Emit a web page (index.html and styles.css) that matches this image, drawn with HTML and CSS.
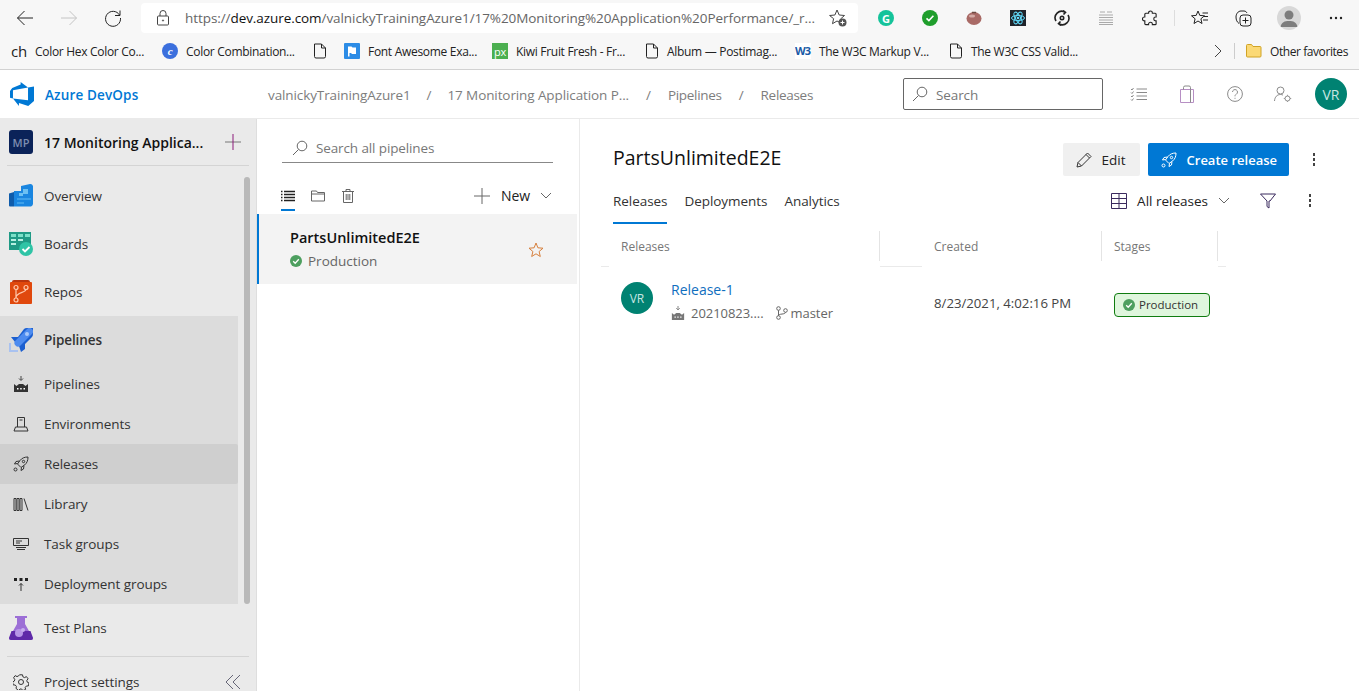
FILE: index.html
```html
<!DOCTYPE html>
<html lang="en">
<head>
  <meta charset="UTF-8">
  <meta name="viewport" content="width=device-width, initial-scale=1.0">
  <title>Releases - Azure DevOps</title>
  <link rel="stylesheet" href="styles.css">
</head>
<body>
<div class="browser">
  <div class="toolbar">
    <div class="nav-btns">
      <span class="tool"><svg width="18" height="18" viewBox="0 0 18 18" class="ic"><path d="M17 9H1.500M8.500 2 1.500 9l7 7"/></svg></span>
      <span class="tool off"><svg width="18" height="18" viewBox="0 0 18 18" class="ic"><path d="M1 9h15.500M9.500 2l7 7-7 7"/></svg></span>
      <span class="tool"><svg width="18" height="18" viewBox="0 0 18 18" class="ic"><path d="M15.500 6A7.500 7.500 0 1 0 16.500 9M16 1.500V6.500H11"/></svg></span>
    </div>
    <div class="address">
      <svg width="14" height="16" viewBox="0 0 14 16" class="ic thin"><rect x="1.500" y="6" width="11" height="9" rx="1"/><path d="M4 6V3.500a3 3 0 0 1 6 0V6"/><circle cx="7" cy="10.500" r=".6"/></svg>
      <span class="url"><span class="url-dim">https://</span>dev.azure.com<span class="url-dim">/valnickyTrainingAzure1/17%20Monitoring%20Application%20Performance/_r...</span></span>
      <svg width="20" height="20" viewBox="0 0 20 20" class="ic thin"><path d="M9 2l2.200 5 5.300.5-4 3.500 1 4.200L9 13l-4.500 2.700 1.100-5-4-3.200 5.300-.5z"/><circle cx="14.500" cy="14.500" r="4" fill="#555" stroke="none"/><path d="M14.500 12.500v4M12.500 14.500h4" stroke="#fff"/></svg>
    </div>
    <div class="exts">
      <span class="tool"><span class="ext-g">G</span></span>
      <span class="tool"><svg width="16" height="16" viewBox="0 0 16 16"><circle cx="8" cy="8" r="8" fill="#1f9e2c"/><path d="M4.500 8.300l2.400 2.300 4.500-4.800" fill="none" stroke="#fff" stroke-width="1.600"/></svg></span>
      <span class="tool"><svg width="16" height="14" viewBox="0 0 16 14"><ellipse cx="8" cy="7.500" rx="7.500" ry="6.500" fill="#a96a66"/><ellipse cx="6" cy="5" rx="3" ry="1.500" fill="#d3aaa5"/><path d="M6 1.500h4" stroke="#6d4b42" stroke-width="1.500"/></svg></span>
      <span class="tool"><svg width="16" height="16" viewBox="0 0 16 16"><rect width="16" height="16" fill="#20232a"/><g fill="none" stroke="#61dafb"><ellipse cx="8" cy="8" rx="6.500" ry="2.600"/><ellipse cx="8" cy="8" rx="6.500" ry="2.600" transform="rotate(60 8 8)"/><ellipse cx="8" cy="8" rx="6.500" ry="2.600" transform="rotate(120 8 8)"/></g><circle cx="8" cy="8" r="1.300" fill="#61dafb"/></svg></span>
      <span class="tool"><svg width="16" height="16" viewBox="0 0 16 16" class="ic bold"><path d="M2 11A6.500 6.500 0 0 1 11 2.200M14 5a6.500 6.500 0 0 1-9 8.800M9 .5l2.500 1.800L9.500 4.500M7 15.500 4.500 13.700l2-2.200"/><circle cx="8" cy="8" r="1.700"/></svg></span>
      <span class="tool"><svg width="16" height="16" viewBox="0 0 16 16" class="lines"><path d="M2 2h5M9 2h5M1 5h14M1 7.500h14M1 10h14M1 12.500h14M1 14.500h14"/></svg></span>
      <span class="tool"><svg width="16" height="16" viewBox="-1 0 17 16" class="ic bold2"><path d="M6 2.500a2 2 0 0 1 4 0V3h3a1 1 0 0 1 1 1v3h-.5a2 2 0 0 0 0 4h.5v3a1 1 0 0 1-1 1h-3v-.5a2 2 0 0 0-4 0v.5H3a1 1 0 0 1-1-1v-3h-.5a2 2 0 0 1 0-4H2V4a1 1 0 0 1 1-1h3z"/></svg></span>
      <span class="tool-sep"></span>
      <span class="tool"><svg width="18" height="16" viewBox="0 0 18 16" class="ic thin"><path d="M7 1l1.800 4.400 4.700.4-3.600 3 1.100 4.700L7 11l-4 2.500 1.100-4.700-3.600-3 4.700-.4z"/><path d="M11.500 3H17M13 6.500h4M12 10h5"/></svg></span>
      <span class="tool"><svg width="18" height="18" viewBox="0 0 18 18" class="ic thin"><path d="M4 14.500C2 13 1 11 1 8c0-3 2-6 5-6h3c1.500 0 2.500 1 3 2"/><rect x="5" y="6" width="11" height="11" rx="3"/><path d="M10.500 8.500v6M7.500 11.500h6"/></svg></span>
      <span class="tool"><span class="browser-avatar"><svg width="24" height="24" viewBox="0 0 24 24"><circle cx="12" cy="9" r="4.500" fill="#7d7d7d"/><path d="M3.500 21c1-5 4-6 8.500-6s7.500 1 8.500 6z" fill="#7d7d7d"/></svg></span></span>
      <span class="tool"><svg width="14" height="4" viewBox="0 0 14 4" class="dots-h"><circle cx="2" cy="2" r="1.200"/><circle cx="7" cy="2" r="1.200"/><circle cx="12" cy="2" r="1.200"/></svg></span>
    </div>
  </div>
  <div class="bookmarks">
    <div class="bm"><span class="bm-ch">ch</span><span>Color Hex Color Co...</span></div>
    <div class="bm"><span class="bm-c">c</span><span>Color Combination...</span></div>
    <div class="bm"><svg width="14" height="16" viewBox="0 0 14 16" class="ic doc"><path d="M1.500 1h7l4 4v8.500a1.500 1.500 0 0 1-1.500 1.500H3a1.500 1.500 0 0 1-1.500-1.500zM8.500 1v4h4"/></svg></div>
    <div class="bm"><svg width="16" height="16" viewBox="0 0 16 16"><rect width="16" height="16" rx="1" fill="#2c8ce6"/><path d="M4 3.500h3.500l1 1H12V11H8l-1-1H5.500v3.500H4z" fill="#fff"/></svg><span>Font Awesome Exa...</span></div>
    <div class="bm"><span class="bm-px">px</span><span>Kiwi Fruit Fresh - Fr...</span></div>
    <div class="bm"><svg width="14" height="16" viewBox="0 0 14 16" class="ic doc"><path d="M1.500 1h7l4 4v8.500a1.500 1.500 0 0 1-1.500 1.500H3a1.500 1.500 0 0 1-1.500-1.500zM8.500 1v4h4"/></svg><span>Album — Postimag...</span></div>
    <div class="bm"><span class="bm-w3">W3</span><span>The W3C Markup V...</span></div>
    <div class="bm"><svg width="14" height="16" viewBox="0 0 14 16" class="ic doc"><path d="M1.500 1h7l4 4v8.500a1.500 1.500 0 0 1-1.500 1.500H3a1.500 1.500 0 0 1-1.500-1.500zM8.500 1v4h4"/></svg><span>The W3C CSS Valid...</span></div>
    <div class="bm-end">
      <svg width="10" height="14" viewBox="0 0 10 14" class="ic thin"><path d="M2 1l6 6-6 6"/></svg>
      <span class="bm-sep"></span>
      <svg width="16" height="14" viewBox="0 0 16 14"><path d="M.5 12V1.500a1 1 0 0 1 1-1h4l1.500 2h7a1 1 0 0 1 1 1V12a1 1 0 0 1-1 1h-12.500a1 1 0 0 1-1-1z" fill="#fbd975" stroke="#d0a326"/></svg>
      <span>Other favorites</span>
    </div>
  </div>
</div>

<header class="topbar">
  <div class="brand">
    <svg width="24" height="24" viewBox="0 0 24 24"><path fill="#0078d4" d="M0 8.877L2.247 5.910l8.405-3.416V.022l7.370 5.393L2.966 8.338v8.225L0 15.707zm24-4.450v14.651l-5.753 4.900-9.303-3.057v3.056l-5.978-7.416 15.057 1.798V5.415z"/></svg>
    <span>Azure DevOps</span>
  </div>
  <nav class="crumbs">
    <span>valnickyTrainingAzure1</span><i>/</i>
    <span>17 Monitoring Application P...</span><i class="wide">/</i>
    <span class="tail">Pipelines</span><i class="wide">/</i>
    <span class="tail">Releases</span>
  </nav>
  <div class="top-search">
    <svg width="16" height="16" viewBox="0 0 16 16" class="ic search"><circle cx="10" cy="6" r="4.800"/><path d="M6.500 9.500 1 15"/></svg>
    <span>Search</span>
  </div>
  <div class="top-icons">
    <span class="top-ic"><svg width="18" height="16" viewBox="0 0 18 16" class="ic gray"><path d="M6.500 3H17M6.500 6.500H17M6.500 10H17M6.500 13.500H17M1 3l1 1 1.500-2M1 6.500l1 1 1.500-2M1 10l1 1 1.500-2M1 13.500l1 1 1.500-2"/></svg></span>
    <span class="top-ic"><svg width="14" height="18" viewBox="0 0 14 18" class="ic gray"><path d="M.5 4.500h13v13H.5z" stroke="#b78fc4"/><path d="M3.500 4.500V2.500a1.500 1.500 0 0 1 1.500-1.500h4a1.500 1.500 0 0 1 1.500 1.500v2M10.500 4.500v13"/></svg></span>
    <span class="top-ic"><svg width="16" height="16" viewBox="0 0 16 16" class="ic gray"><circle cx="8" cy="8" r="7.400"/><path d="M5.500 6a2.500 2.500 0 1 1 3.800 2.200C8.300 8.800 8 9.300 8 10.300M8 11.800v1"/></svg></span>
    <span class="top-ic"><svg width="18" height="16" viewBox="0 0 18 16" class="ic gray"><circle cx="6.500" cy="4.500" r="3.500"/><path d="M.5 15c.3-4 2.500-6.500 6-6.500 1 0 1.800.2 2.500.6"/><circle cx="13.500" cy="12.500" r="2.500"/><path d="M13.500 8.800v1M13.500 15.200v.8M9.800 12.500h1M16.200 12.500h1"/></svg></span>
    <span class="avatar big">VR</span>
  </div>
</header>

<div class="app">
  <aside class="sidebar">
    <div class="project">
      <span class="project-tile">MP</span>
      <b>17 Monitoring Applica...</b>
      <svg width="16" height="16" viewBox="0 0 16 16" class="plus"><path d="M0 8h16" stroke="#777"/><path d="M8 0v16" stroke="#8c1a7a"/></svg>
    </div>
    <div class="nav">
      <a class="nav-item">
        <svg width="24" height="24" viewBox="0 0 24 24"><path d="M0 9.500 5 8v14.500H1a1 1 0 0 1-1-1z" fill="#0f5cab"/><path d="M5 7h7V2l9-2a3 3 0 0 1 3 2v18a3 3 0 0 1-2 2.500H5z" fill="#1a86e0"/><path d="M14 5h5v5h-5zM10 9h4v3h-4z" fill="#6cc0f3"/><path d="M8 14h14v2H8zM8 18h7v2H8z" fill="#3ea1ea"/></svg>
        <span>Overview</span>
      </a>
      <a class="nav-item">
        <svg width="24" height="24" viewBox="0 0 24 24"><path d="M0 0h22v18H0z" fill="#1f9a85"/><path d="M2 2h5v3H2zM9 2h5v3H9zM16 2h5v3h-5z" fill="#7be0c8"/><path d="M2 7h5v2H2zM2 11h5v2H2zM9 7h5v2H9z" fill="#b7efe2"/><circle cx="17" cy="17" r="7" fill="#2fc4a6"/><path d="M13.500 17l2.500 2.500 4.500-4.500" fill="none" stroke="#fff" stroke-width="1.800"/></svg>
        <span>Boards</span>
      </a>
      <a class="nav-item">
        <svg width="24" height="24" viewBox="0 0 24 24"><path d="M3 2a2 2 0 0 1 2-2h14a2 2 0 0 1 2 2H3z" fill="#b8350f"/><path d="M2 2h20a1 1 0 0 1 1 1v20a1 1 0 0 1-1 1H1V3a1 1 0 0 1 1-1z" fill="#e0480d"/><g fill="none" stroke="#ffc9ad" stroke-width="1.200"><circle cx="7" cy="7.500" r="2"/><circle cx="17" cy="7.500" r="2"/><circle cx="7" cy="20" r="2"/><path d="M7 9.500V18M17 9.500c0 3-10 3-10 8"/></g></svg>
        <span>Repos</span>
      </a>
      <div class="nav-group">
        <a class="nav-item">
          <svg width="24" height="24" viewBox="0 0 24 24"><path d="M2 9h7l6-8q1-1 3-1h6v6q0 2-1 3l-7 7v5l-4 3-2-6-4-4z" fill="#1b5fd0"/><path d="M20.500 3.500 9 15" stroke="#4d8bef" stroke-width="7" stroke-linecap="round"/><circle cx="18" cy="6" r="2" fill="#a9c9fb"/><path d="M0 15h2v7h7v2H0z" fill="#a9c2f0"/></svg>
          <span class="nav-head">Pipelines</span>
        </a>
        <a class="nav-sub">
          <svg width="16" height="16" viewBox="0 0 16 16"><path d="M8 0v4M6 2.500 8 4.500l2-2" fill="none" stroke="#444"/><path d="M1 16V8l2.500 2L6 8h4l2.500 2L15 8v8z" fill="#333"/><path d="M4 12h1.500v1.500H4zM7.200 12h1.500v1.500H7.200zM10.500 12H12v1.500h-1.500z" fill="#fff"/></svg>
          <span>Pipelines</span>
        </a>
        <a class="nav-sub">
          <svg width="16" height="16" viewBox="0 0 16 16" class="ic"><path d="M4.500 11V1.500h7V11M2.500 11h11l1.500 4H1zM6.500 4h3"/></svg>
          <span>Environments</span>
        </a>
        <a class="nav-sub active">
          <svg width="16" height="16" viewBox="0 0 16 16" class="ic"><path d="M15 1c-3.500 0-6 1-8 3.500L4.500 8l3.500 3.500L11.500 9C14 7 15 4.500 15 1zM6.500 5 3 5.500 1.500 8l3-.5M11 9.500l-.5 3.500L8 14.500l.5-3"/><circle cx="10.500" cy="5.500" r="1.200"/><circle cx="2.500" cy="13.500" r="1.500"/></svg>
          <span>Releases</span>
        </a>
        <a class="nav-sub">
          <svg width="16" height="16" viewBox="0 0 16 16" class="ic"><path d="M1 2.500h2v12H1zM4 2.500h2v12H4zM7 2.500h2v12H7zM11 2.500l4 12"/></svg>
          <span>Library</span>
        </a>
        <a class="nav-sub">
          <svg width="16" height="16" viewBox="0 0 16 16" class="ic"><path d="M.5 2.500h15v7H.5zM3 5h6M3 7h4M3 11.500h10M4 13.500h8"/></svg>
          <span>Task groups</span>
        </a>
        <a class="nav-sub">
          <svg width="16" height="16" viewBox="0 0 16 16"><path d="M1 2h3v3H1zM6.500 2h3v3h-3zM12 2h3v3h-3z" fill="#222"/><path d="M8 7.500V15M6 9.500l2-2 2 2" fill="none" stroke="#333"/></svg>
          <span>Deployment groups</span>
        </a>
      </div>
      <a class="nav-item">
        <svg width="24" height="24" viewBox="0 0 24 24"><path d="M6 0h12v2h-2v6l8 14a2 2 0 0 1-2 2H2a2 2 0 0 1-2-2L8 8V2H6z" fill="#9c6fd6"/><path d="M2.500 15h19l2.500 7a2 2 0 0 1-2 2H2a2 2 0 0 1-2-2z" fill="#5f2aa8"/><circle cx="10" cy="17" r="4" fill="#b796e6"/><circle cx="14" cy="14" r="2" fill="#c7aeee"/></svg>
        <span>Test Plans</span>
      </a>
    </div>
    <div class="side-foot">
      <svg width="16" height="16" viewBox="0 0 16 16" class="ic"><circle cx="8" cy="8" r="2.500"/><path d="M6.500.8h3l.4 2 1.700.8 1.800-1 1.700 2.200-1.300 1.600.4 1.700 1.800.9-.6 2.900-2 .1-1.200 1.400.4 2-2.700 1.200-1.300-1.600H7l-1.300 1.600L3 14.400l.4-2-1.200-1.400-2-.1-.6-2.900L1.400 7l.4-1.700L.5 3.800 2.200 1.600l1.800 1 1.700-.8z"/></svg>
      <span>Project settings</span>
      <svg width="16" height="16" viewBox="0 0 16 16" class="ic collapse"><path d="M8 1 1 8l7 7M15 1 8 8l7 7"/></svg>
    </div>
    <div class="side-scroll"></div>
  </aside>

  <section class="list-pane">
    <div class="pipe-search">
      <svg width="16" height="16" viewBox="0 0 16 16" class="ic search"><circle cx="10" cy="6" r="4.800"/><path d="M6.500 9.500 1 15"/></svg>
      <span>Search all pipelines</span>
    </div>
    <div class="pipe-tools">
      <span class="pipe-tab on"><svg width="14" height="12" viewBox="0 0 14 12" class="ic dark"><path d="M3 1.500h11M3 4.500h11M3 7.500h11M3 10.500h11M0 1.500h1.500M0 4.500h1.500M0 7.500h1.500M0 10.500h1.500"/></svg></span>
      <span class="pipe-tab"><svg width="14" height="12" viewBox="0 0 14 12" class="ic gray2"><path d="M.5 11V1h5l1 1.500h7V11z"/><path d="M.5 4h13"/></svg></span>
      <span class="pipe-tab"><svg width="12" height="14" viewBox="0 0 12 14" class="ic gray2"><path d="M0 2.500h12M4 2.500V.5h4v2M1.500 2.500v11h9v-11M4.200 5v6M6 5v6M7.800 5v6"/></svg></span>
      <span class="new-btn">
        <svg width="16" height="16" viewBox="0 0 16 16" class="ic gray2"><path d="M8 0v16M0 8h16"/></svg>
        <span>New</span>
        <svg width="12" height="8" viewBox="0 0 12 8" class="ic gray2"><path d="M1 1l5 5 5-5"/></svg>
      </span>
    </div>
    <div class="pipe-row">
      <div class="pipe-info">
        <b>PartsUnlimitedE2E</b>
        <div class="pipe-status">
          <svg width="12" height="12" viewBox="0 0 12 12"><circle cx="6" cy="6" r="6" fill="#4d9f5f"/><path d="M3.200 6.200l2 2 3.600-4" fill="none" stroke="#fff" stroke-width="1.300"/></svg>
          <span>Production</span>
        </div>
      </div>
      <svg width="16" height="16" viewBox="0 0 16 16" class="star"><path d="M8 1l1.900 4.800 5.100.4-3.900 3.300 1.200 5L8 11.800l-4.300 2.700 1.200-5L1 6.200l5.100-.4z"/></svg>
    </div>
  </section>

  <main class="content">
    <div class="title-row">
      <h1>PartsUnlimitedE2E</h1>
      <div class="actions">
        <button class="btn"><svg width="16" height="16" viewBox="0 0 16 16" class="ic"><path d="M1 15l1-4.500L11.500 1 15 4.500 5.500 14zM2 10.500 5.500 14M10 2.500 13.500 6"/></svg>Edit</button>
        <button class="btn primary"><svg width="16" height="16" viewBox="0 0 16 16" class="ic white"><path d="M15 1c-3.500 0-6 1-8 3.500L4.500 8l3.500 3.500L11.500 9C14 7 15 4.500 15 1zM6.500 5 3 5.500 1.500 8l3-.5M11 9.500l-.5 3.500L8 14.500l.5-3"/><circle cx="10.500" cy="5.500" r="1.200"/><circle cx="2.500" cy="13.500" r="1.500"/></svg>Create release</button>
        <span class="kebab"><i></i><i></i><i></i></span>
      </div>
    </div>
    <div class="tab-row">
      <a class="tab on">Releases</a>
      <a class="tab">Deployments</a>
      <a class="tab">Analytics</a>
      <div class="tab-tools">
        <svg width="16" height="16" viewBox="0 0 16 16" class="ic grid-ic"><path d="M.5.500h15v15H.5zM.5 5.500h15M.5 10.500h15M8 .5v15"/></svg>
        <span>All releases</span>
        <svg width="12" height="8" viewBox="0 0 12 8" class="ic gray2"><path d="M1 1l5 5 5-5"/></svg>
        <svg width="16" height="16" viewBox="0 0 16 16" class="ic filter"><path d="M.5 1h15L10 8l-1 0v7l-2-1.500V8z"/></svg>
        <span class="kebab"><i></i><i></i><i></i></span>
      </div>
    </div>
    <div class="table">
      <div class="thead">
        <div class="th first"><span>Releases</span></div>
        <div class="th-gap"></div>
        <div class="th"><span>Created</span></div>
        <div class="th"><span>Stages</span></div>
      </div>
      <div class="trow">
        <div class="release">
          <span class="avatar">VR</span>
          <div>
            <a class="release-name">Release-1</a>
            <div class="release-meta">
              <svg width="14" height="14" viewBox="0 0 16 16"><path d="M8 0v4M6 2.500 8 4.500l2-2" fill="none" stroke="#777"/><path d="M1 16V8l2.500 2L6 8h4l2.500 2L15 8v8z" fill="#777"/><path d="M4 12h1.500v1.500H4zM7.200 12h1.500v1.500H7.200zM10.500 12H12v1.500h-1.500z" fill="#fff"/></svg>
              <span class="build">20210823....</span>
              <svg width="12" height="14" viewBox="0 0 12 14" class="ic gray2"><circle cx="2.500" cy="2.500" r="1.800"/><circle cx="2.500" cy="11.500" r="1.800"/><circle cx="9.500" cy="4.500" r="1.800"/><path d="M2.500 4.300v5.400M9.500 6.300c0 2.500-7 1-7 3.400"/></svg>
              <span class="branch">master</span>
            </div>
          </div>
        </div>
        <div class="date">8/23/2021, 4:02:16 PM</div>
        <div class="stage-cell">
          <span class="stage"><svg width="12" height="12" viewBox="0 0 12 12"><circle cx="6" cy="6" r="6" fill="#4d9f5f"/><path d="M3.200 6.200l2 2 3.600-4" fill="none" stroke="#fff" stroke-width="1.300"/></svg><em>Production</em></span>
        </div>
      </div>
    </div>
  </main>
</div>
</body>
</html>
```

FILE: styles.css
```css
* { box-sizing: border-box; }
html, body { height: 100%; }
body { margin: 0; height: 691px; overflow: hidden; background: #fff; color: #222; font-family: "Open Sans", "Noto Sans", Arial, sans-serif; font-size: 13px; }
svg { display: block; flex: none; }
.ic { fill: none; stroke: #333; stroke-width: 1; }
.ic.thin { stroke: #444; }
.ic.bold { stroke: #333; stroke-width: 1.600; }
.ic.bold2 { stroke: #222; stroke-width: 1.200; }
.ic.gray { stroke: #8a8a8a; }
.ic.gray2 { stroke: #666; }
.ic.dark { stroke: #222; stroke-width: 1.500; }
.ic.white { stroke: #fff; }
.ic.doc { stroke: #222; }
.ic.search { stroke: #666; }

/* browser chrome */
.browser { height: 70px; background: #f7f7f7; border-bottom: 1px solid #d2d2d2; }
.toolbar { height: 35px; display: flex; align-items: center; padding-top: 1px; }
.nav-btns { width: 135px; padding-left: 3px; display: flex; }
.tool { width: 44px; height: 30px; display: flex; align-items: center; justify-content: center; }
.tool .ic { stroke: #222; }
.tool.off .ic { stroke: #c4c4c4; }
.address { width: 717px; height: 30px; margin-left: 6px; background: #fff; border-radius: 4px; display: flex; align-items: center; padding: 0 10px 0 15px; }
.url { flex: 1; margin-left: 15px; font-size: 13.500px; letter-spacing: -.07px; white-space: nowrap; overflow: hidden; color: #111; }
.url-dim { color: #666; }
.exts { display: flex; align-items: center; margin-left: 6px; }
.ext-g { width: 16px; height: 16px; border-radius: 50%; background: #15c39a; color: #fff; font-size: 11px; font-weight: 700; display: flex; align-items: center; justify-content: center; }
.tool .lines { fill: none; stroke: #aaa; stroke-width: 1; }
.tool-sep { width: 1px; height: 16px; background: #ddd; margin: 0 3px 0 2px; }
.browser-avatar { width: 24px; height: 24px; border-radius: 50%; background: #d8d8d8; overflow: hidden; margin-left: 2px; }
.dots-h { fill: #222; margin-left: 8px; }
.bookmarks { height: 34px; padding: 0 0 2px 11px; display: grid; grid-template-columns: 151px 151px 31px 148px 153px 150px 154px 240px 1fr; align-items: center; font-size: 12px; letter-spacing: -.3px; color: #222; white-space: nowrap; }
.bm { display: flex; align-items: center; gap: 8px; overflow: hidden; height: 20px; }
.bm-ch { font-size: 15px; width: 16px; line-height: 1; color: #222; }
.bm-c { width: 16px; height: 16px; border-radius: 50%; background: #3b6fdd; color: #fff; font: italic 700 11px "Liberation Serif", serif; display: flex; align-items: center; justify-content: center; }
.bm-px { width: 16px; height: 16px; background: #4caf50; color: #fff; font-size: 11px; display: flex; align-items: center; justify-content: center; line-height: 1; }
.bm-w3 { width: 16px; background: #fff; color: #1a5aa6; font-size: 11px; font-weight: 700; letter-spacing: -1px; line-height: 16px; }
.bm-end { display: flex; align-items: center; justify-content: flex-end; padding-right: 11px; letter-spacing: -.42px; }
.bm-sep { width: 1px; height: 16px; background: #ccc; margin: 0 11px; }
.bm-end span:last-child { margin-left: 8px; }

/* azure header */
.topbar { height: 49px; display: flex; align-items: center; border-bottom: 1px solid #eaeaea; }
.brand { width: 268px; padding: 2px 0 0 10px; display: flex; align-items: center; gap: 11px; color: #0078d4; font-weight: 600; font-size: 13.500px; letter-spacing: .15px; }
.brand svg { margin-top: -2px; }
.crumbs { flex: 1; display: flex; align-items: center; color: #7d7d7d; font-size: 13.500px; letter-spacing: -.1px; white-space: nowrap; padding-top: 2px; }
.crumbs i { font-style: normal; margin: 0 16px; }
.crumbs i.wide { margin: 0 17px; }
.crumbs .tail { letter-spacing: -.3px; }
.top-search { width: 200px; height: 32px; margin-right: 12px; border: 1px solid #666; border-radius: 2px; display: flex; align-items: center; gap: 8px; padding-left: 8px; color: #777; font-size: 13.500px; letter-spacing: -.1px; }
.top-search span { padding-top: 2px; }
.top-icons { display: flex; align-items: center; padding-right: 4px; }
.top-ic { width: 48px; display: flex; justify-content: center; }
.avatar { width: 32px; height: 32px; border-radius: 50%; background: #008272; color: #c8e6e2; font-size: 12px; display: flex; align-items: center; justify-content: center; flex: none; }
.avatar.big { font-size: 14px; margin: 0 8px; }

/* layout */
.app { display: flex; height: 572px; }

/* sidebar */
.sidebar { width: 257px; flex: none; background: #eaeaea; border-right: 1px solid #dedede; position: relative; overflow: hidden; }
.project { height: 47px; margin: 0 7px; padding: 0 2px; border-bottom: 1px solid #d4d4d4; display: flex; align-items: center; gap: 11px; font-size: 14px; }
.project b { font-weight: 600; flex: 1; white-space: nowrap; color: #111; }
.project-tile { width: 24px; height: 24px; border-radius: 3px; background: #0b2359; color: #7d8db0; font-size: 11px; font-weight: 600; display: flex; align-items: center; justify-content: center; }
.plus { margin-right: 6px; }
.nav { padding-top: 6px; }
.nav a { display: flex; align-items: center; color: #333; font-size: 13.500px; letter-spacing: -.08px; }
.nav-item { height: 48px; padding-left: 9px; gap: 11px; }
.nav-group { width: 238px; background: #dcdcdc; height: 288px; }
.nav-head { font-weight: 600; }
.nav-sub { height: 40px; padding-left: 13px; gap: 15px; }
.nav-sub.active { background: #cfcfcf; border-radius: 0 2px 2px 0; }
.side-foot { margin: 4px 7px 0; border-top: 1px solid #d4d4d4; height: 48px; padding: 2px 2px 0 6px; display: flex; align-items: center; gap: 15px; font-size: 13.500px; letter-spacing: -.08px; color: #333; }
.side-foot span { flex: 1; }
.ic.collapse { stroke: #667; margin-right: 6px; }
.side-scroll { position: absolute; left: 244px; top: 58px; width: 6px; height: 427px; border-radius: 3px; background: #b9b9b9; }

/* pipelines list */
.list-pane { width: 323px; flex: none; border-right: 1px solid #eaeaea; }
.pipe-search { height: 34px; margin: 10px 26px 0 25px; padding: 4px 0 0 10px; border-bottom: 1px solid #888; display: flex; align-items: center; gap: 8px; color: #777; font-size: 13.500px; letter-spacing: -.12px; }
.pipe-tools { height: 48px; margin: 0 26px 0 24px; display: flex; align-items: center; gap: 16px; padding-top: 17px; }
.pipe-tab { position: relative; width: 14px; display: flex; justify-content: center; }
.pipe-tab.on::after { content: ""; position: absolute; left: 0; right: 0; top: 19px; height: 2px; background: #0078d4; }
.new-btn { margin-left: auto; display: flex; align-items: center; gap: 11px; font-size: 14px; color: #222; letter-spacing: -.1px; }
.new-btn svg:last-child { margin: 0 1px 0 -1px; }
.pipe-row { height: 70px; margin-right: 2px; background: #f3f3f3; border-left: 2px solid #0078d4; display: flex; align-items: center; padding: 0 33px 0 31px; margin-top: 3px; justify-content: space-between; }
.pipe-info b { display: block; font-size: 14.500px; font-weight: 600; color: #111; margin-bottom: 5px; }
.pipe-status { display: flex; align-items: center; gap: 6px; color: #666; font-size: 13.500px; }
.star { fill: none; stroke: #d67f3c; stroke-width: 1; margin-top: 1px; }

/* release content */
.content { flex: 1; min-width: 0; }
.title-row { height: 57px; padding: 24px 37px 0 33px; display: flex; align-items: flex-start; justify-content: space-between; }
.title-row h1 { margin: 1px 0 0; font-size: 19.500px; line-height: 28px; font-weight: 500; color: #111; }
.actions { display: flex; align-items: center; gap: 8px; }
.btn { height: 33px; border: 0; border-radius: 2px; background: #f0f0f0; color: #222; display: flex; align-items: center; gap: 10px; padding: 0 14px 0 13px; font: 13.500px "Open Sans", "Noto Sans", Arial, sans-serif; }
.btn.primary { background: #0078d4; color: #fff; font-weight: 600; font-size: 13px; padding-right: 12px; }
.kebab { width: 16px; margin-left: 9px; display: flex; flex-direction: column; align-items: center; gap: 2px; }
.kebab i { width: 2px; height: 3px; background: #444; }
.tab-row { height: 49px; margin-left: 33px; padding-right: 41px; display: flex; align-items: center; gap: 17px; }
.tab { height: 47px; display: flex; align-items: center; font-size: 13.500px; letter-spacing: -.05px; color: #333; position: relative; }
.tab.on::after { content: ""; position: absolute; left: 0; right: 0; bottom: 0; height: 2px; background: #0078d4; }
.tab-tools { margin-left: auto; display: flex; align-items: center; gap: 10px; font-size: 13.500px; color: #222; }
.ic.grid-ic { stroke: #3b2a5e; }
.ic.filter { stroke: #3b2a5e; margin-left: 20px; }
.tab-tools .kebab { margin-left: 16px; }
.table { width: 625px; margin: 0 0 0 21px; }
.thead { height: 42px; display: grid; grid-template-columns: 8px 271px 42px 180px 116px 1fr; border-bottom: 1px solid #eaeaea; font-size: 12px; color: #777; }
.th { margin-top: 6px; height: 36px; background: #fff; display: flex; align-items: flex-start; }
.th.first { grid-column: 2; }
.th span { flex: 1; height: 30px; display: flex; align-items: center; padding: 1px 0 0 12px; border-right: 1px solid #e4e4e4; }
.trow { height: 62px; padding-top: 1px; display: grid; grid-template-columns: 321px 180px 1fr; }
.release { display: flex; align-items: flex-start; gap: 18px; padding: 12px 0 0 20px; }
.release .avatar { margin-top: 2px; }
.release-name { display: block; color: #106ebe; font-size: 14px; line-height: 19px; }
.release-meta { display: flex; align-items: center; gap: 6px; margin-top: 5px; color: #666; font-size: 13px; letter-spacing: -.05px; }
.build { margin-right: 6px; }
.branch { margin-left: -3px; }
.date { padding: 26px 0 0 12px; color: #444; font-size: 13.200px; }
.stage-cell { padding: 25px 0 0 12px; }
.stage { width: 96px; height: 24px; border: 1px solid #107c10; border-radius: 4px; background: #dff6dd; display: flex; align-items: center; gap: 4px; padding-left: 8px; font-size: 11.500px; color: #333; }
.stage em { font-style: normal; padding-bottom: 2px; }
```
